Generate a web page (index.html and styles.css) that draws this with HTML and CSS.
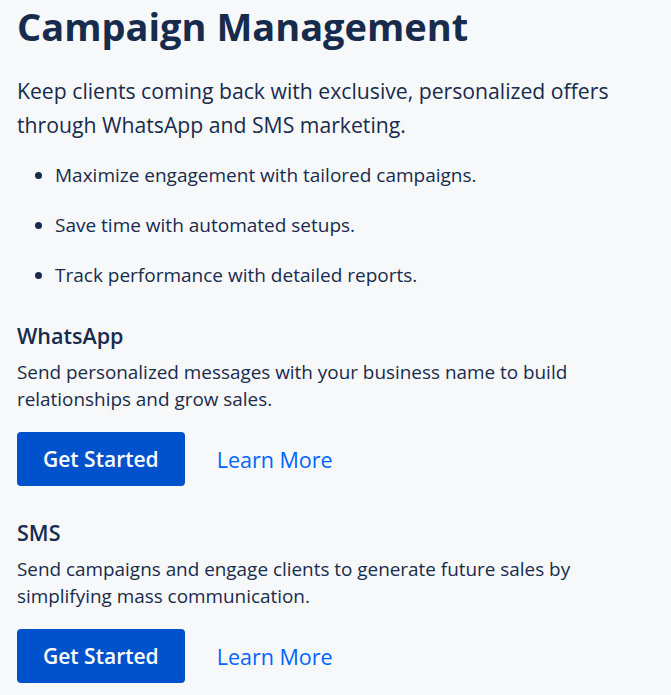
FILE: index.html
```html
<!DOCTYPE html>
<html lang="en">
<head>
<meta charset="utf-8">
<title>Campaign Management</title>
<link rel="stylesheet" href="styles.css">
</head>
<body>
<main class="page">
  <h1 class="title">Campaign Management</h1>
  <p class="intro">Keep clients coming back with exclusive, personalized offers through WhatsApp and SMS marketing.</p>
  <ul class="benefits">
    <li>Maximize engagement with tailored campaigns.</li>
    <li>Save time with automated setups.</li>
    <li>Track performance with detailed reports.</li>
  </ul>
  <section class="channel">
    <h2 class="channel-title">WhatsApp</h2>
    <p class="channel-text">Send personalized messages with your business name to build relationships and grow sales.</p>
    <div class="actions">
      <a class="btn-primary" href="#">Get Started</a>
      <a class="btn-link" href="#">Learn More</a>
    </div>
  </section>
  <section class="channel">
    <h2 class="channel-title">SMS</h2>
    <p class="channel-text">Send campaigns and engage clients to generate future sales by simplifying mass communication.</p>
    <div class="actions">
      <a class="btn-primary" href="#">Get Started</a>
      <a class="btn-link" href="#">Learn More</a>
    </div>
  </section>
</main>
</body>
</html>
```
FILE: styles.css
```css
html, body {
  margin: 0;
  padding: 0;
  background: #f7f8fa;
}
body {
  font-family: "Open Sans", "Noto Sans", sans-serif;
  color: #172b4d;
}
.page {
  padding: 2px 17px 0;
  max-width: 640px;
  display: flex;
  flex-direction: column;
}
.title {
  margin: 0;
  font-size: 38px;
  line-height: 48px;
  font-weight: 700;
  color: #172b4d;
}
.intro {
  margin: 24px 0 0;
  font-size: 21.2px;
  line-height: 34px;
}
.benefits {
  margin: 21px 0 0;
  padding-left: 38px;
  display: flex;
  flex-direction: column;
  gap: 26px;
  font-size: 19px;
  line-height: 24px;
}
.channel {
  display: flex;
  flex-direction: column;
  margin-top: 35px;
}
.channel + .channel {
  margin-top: 33px;
}
.channel-title {
  margin: 0;
  font-size: 21.5px;
  line-height: 28px;
  font-weight: 600;
}
.channel-text {
  margin: 9px 0 0;
  font-size: 18.9px;
  line-height: 27px;
}
.actions {
  margin-top: 19px;
  display: flex;
  align-items: center;
  gap: 32px;
}
.btn-primary {
  display: inline-flex;
  align-items: center;
  justify-content: center;
  height: 54px;
  padding: 0 26px;
  box-sizing: border-box;
  background: #0052cc;
  color: #fff;
  border-radius: 4px;
  font-size: 21px;
  font-weight: 600;
  text-decoration: none;
}
.btn-link {
  color: #0065ff;
  font-size: 21.5px;
  font-weight: 500;
  text-decoration: none;
}
```
